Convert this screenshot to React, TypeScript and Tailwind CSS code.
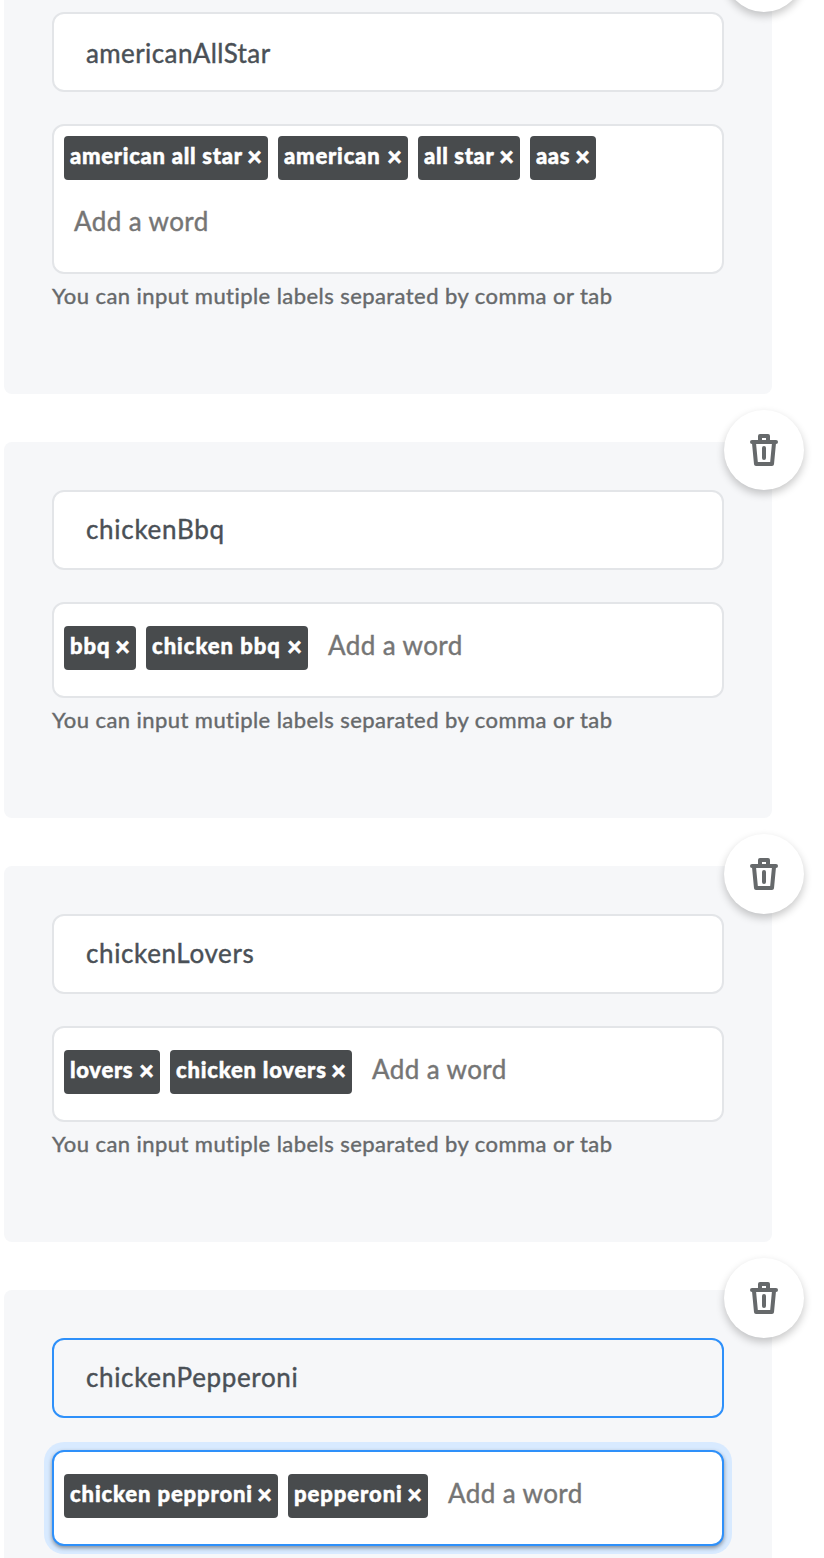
type Tag = { text: string; width: string; tracking: string };

type Entry = {
  name: string;
  nameTracking: string;
  tags: Tag[];
  wrap?: boolean;
  active?: boolean;
};

const entries: Entry[] = [
  {
    name: "americanAllStar",
    nameTracking: "tracking-[0.4px]",
    wrap: true,
    tags: [
      { text: "american all star", width: "w-[204px]", tracking: "tracking-[0.72px]" },
      { text: "american", width: "w-[130px]", tracking: "tracking-[0.8px]" },
      { text: "all star", width: "w-[102px]", tracking: "tracking-[0.65px]" },
      { text: "aas", width: "w-[66px]", tracking: "tracking-[0.6px]" },
    ],
  },
  {
    name: "chickenBbq",
    nameTracking: "tracking-[0.7px]",
    tags: [
      { text: "bbq", width: "w-[72px]", tracking: "tracking-[1px]" },
      { text: "chicken bbq", width: "w-[162px]", tracking: "tracking-[0.98px]" },
    ],
  },
  {
    name: "chickenLovers",
    nameTracking: "tracking-[0.62px]",
    tags: [
      { text: "lovers", width: "w-[96px]", tracking: "tracking-[0.7px]" },
      { text: "chicken lovers", width: "w-[182px]", tracking: "tracking-[0.8px]" },
    ],
  },
  {
    name: "chickenPepperoni",
    nameTracking: "tracking-[0.65px]",
    active: true,
    tags: [
      { text: "chicken pepproni", width: "w-[214px]", tracking: "tracking-[0.88px]" },
      { text: "pepperoni", width: "w-[140px]", tracking: "tracking-[0.95px]" },
    ],
  },
];

function TrashIcon() {
  return (
    <svg width="28" height="32" viewBox="0 0 28 32" fill="none" stroke="#66696b" strokeLinejoin="round" strokeLinecap="round">
      <path d="M2 8H26" strokeWidth="4" />
      <path d="M10 7V2H18V7" strokeWidth="4" />
      <path d="M4 9L6 30H22L24 9" strokeWidth="4" />
      <path d="M14 14V24" strokeWidth="4" />
    </svg>
  );
}

function TagChip({ tag }: { tag: Tag }) {
  return (
    <span
      className={`flex h-11 shrink-0 justify-between rounded-[4px] bg-[#484b4d] pr-[6px] pl-[6px] text-[22px] leading-[40px] font-black whitespace-nowrap text-white [-webkit-text-stroke:0.5px_#fff] ${tag.width}`}
    >
      <span className={tag.tracking}>{tag.text}</span>
      <span className="-ml-2 text-[26px]">×</span>
    </span>
  );
}

function EntryCard({ entry }: { entry: Entry }) {
  return (
    <section className={`relative w-[768px] rounded-[8px] bg-[#f6f7f9] px-12 pt-12 ${entry.wrap ? "h-[430px]" : "h-[376px]"}`}>
      <div
        className={`flex h-20 items-center rounded-[12px] border-2 px-8 text-[26px] text-[#4a5056] [-webkit-text-stroke:0.4px_#4a5056] ${
          entry.wrap ? "pt-[2px]" : "pb-[2px]"
        } ${entry.active ? "border-[#2e90fa] bg-[#f6f7f9]" : "border-[#e3e5e8] bg-white"}`}
      >
        <span className={entry.nameTracking}>{entry.name}</span>
      </div>
      <div
        className={`mt-8 flex flex-wrap content-start gap-x-[10px] rounded-[12px] border-2 bg-white px-[10px] ${
          entry.wrap ? "h-[150px] pt-[10px]" : "h-24 pt-[22px]"
        } ${
          entry.active
            ? "border-[#2e90fa] shadow-[0_2px_4px_rgba(0,0,0,0.4),0_0_0_8px_#d8eaff]"
            : "border-[#e3e5e8]"
        }`}
      >
        {entry.tags.map((tag) => (
          <TagChip key={tag.text} tag={tag} />
        ))}
        <span
          className={`text-[26px] tracking-[0.4px] text-[#757575] [-webkit-text-stroke:0.4px_#757575] ${
            entry.wrap ? "mt-[20px] ml-[10px] basis-full leading-[42px]" : "ml-[10px] leading-[38px]"
          }`}
        >
          Add a word
        </span>
      </div>
      {!entry.active && (
        <p className="mt-[6px] text-[22px] leading-8 tracking-[0.44px] whitespace-nowrap text-[#66696b] [-webkit-text-stroke:0.4px_#66696b]">
          You can input mutiple labels separated by comma or tab
        </p>
      )}
      <button
        aria-label="Delete"
        className="absolute -top-8 -right-8 flex size-20 items-center justify-center rounded-full bg-white shadow-[0_4px_8px_rgba(0,0,0,0.22)]"
      >
        <TrashIcon />
      </button>
    </section>
  );
}

export default function App() {
  return (
    <main className="flex h-[1558px] w-[824px] flex-col overflow-hidden bg-white font-['Lato','Open_Sans',sans-serif]">
      <div className="-mt-9 flex flex-col gap-12 pl-1">
        {entries.map((entry) => (
          <EntryCard key={entry.name} entry={entry} />
        ))}
      </div>
    </main>
  );
}
